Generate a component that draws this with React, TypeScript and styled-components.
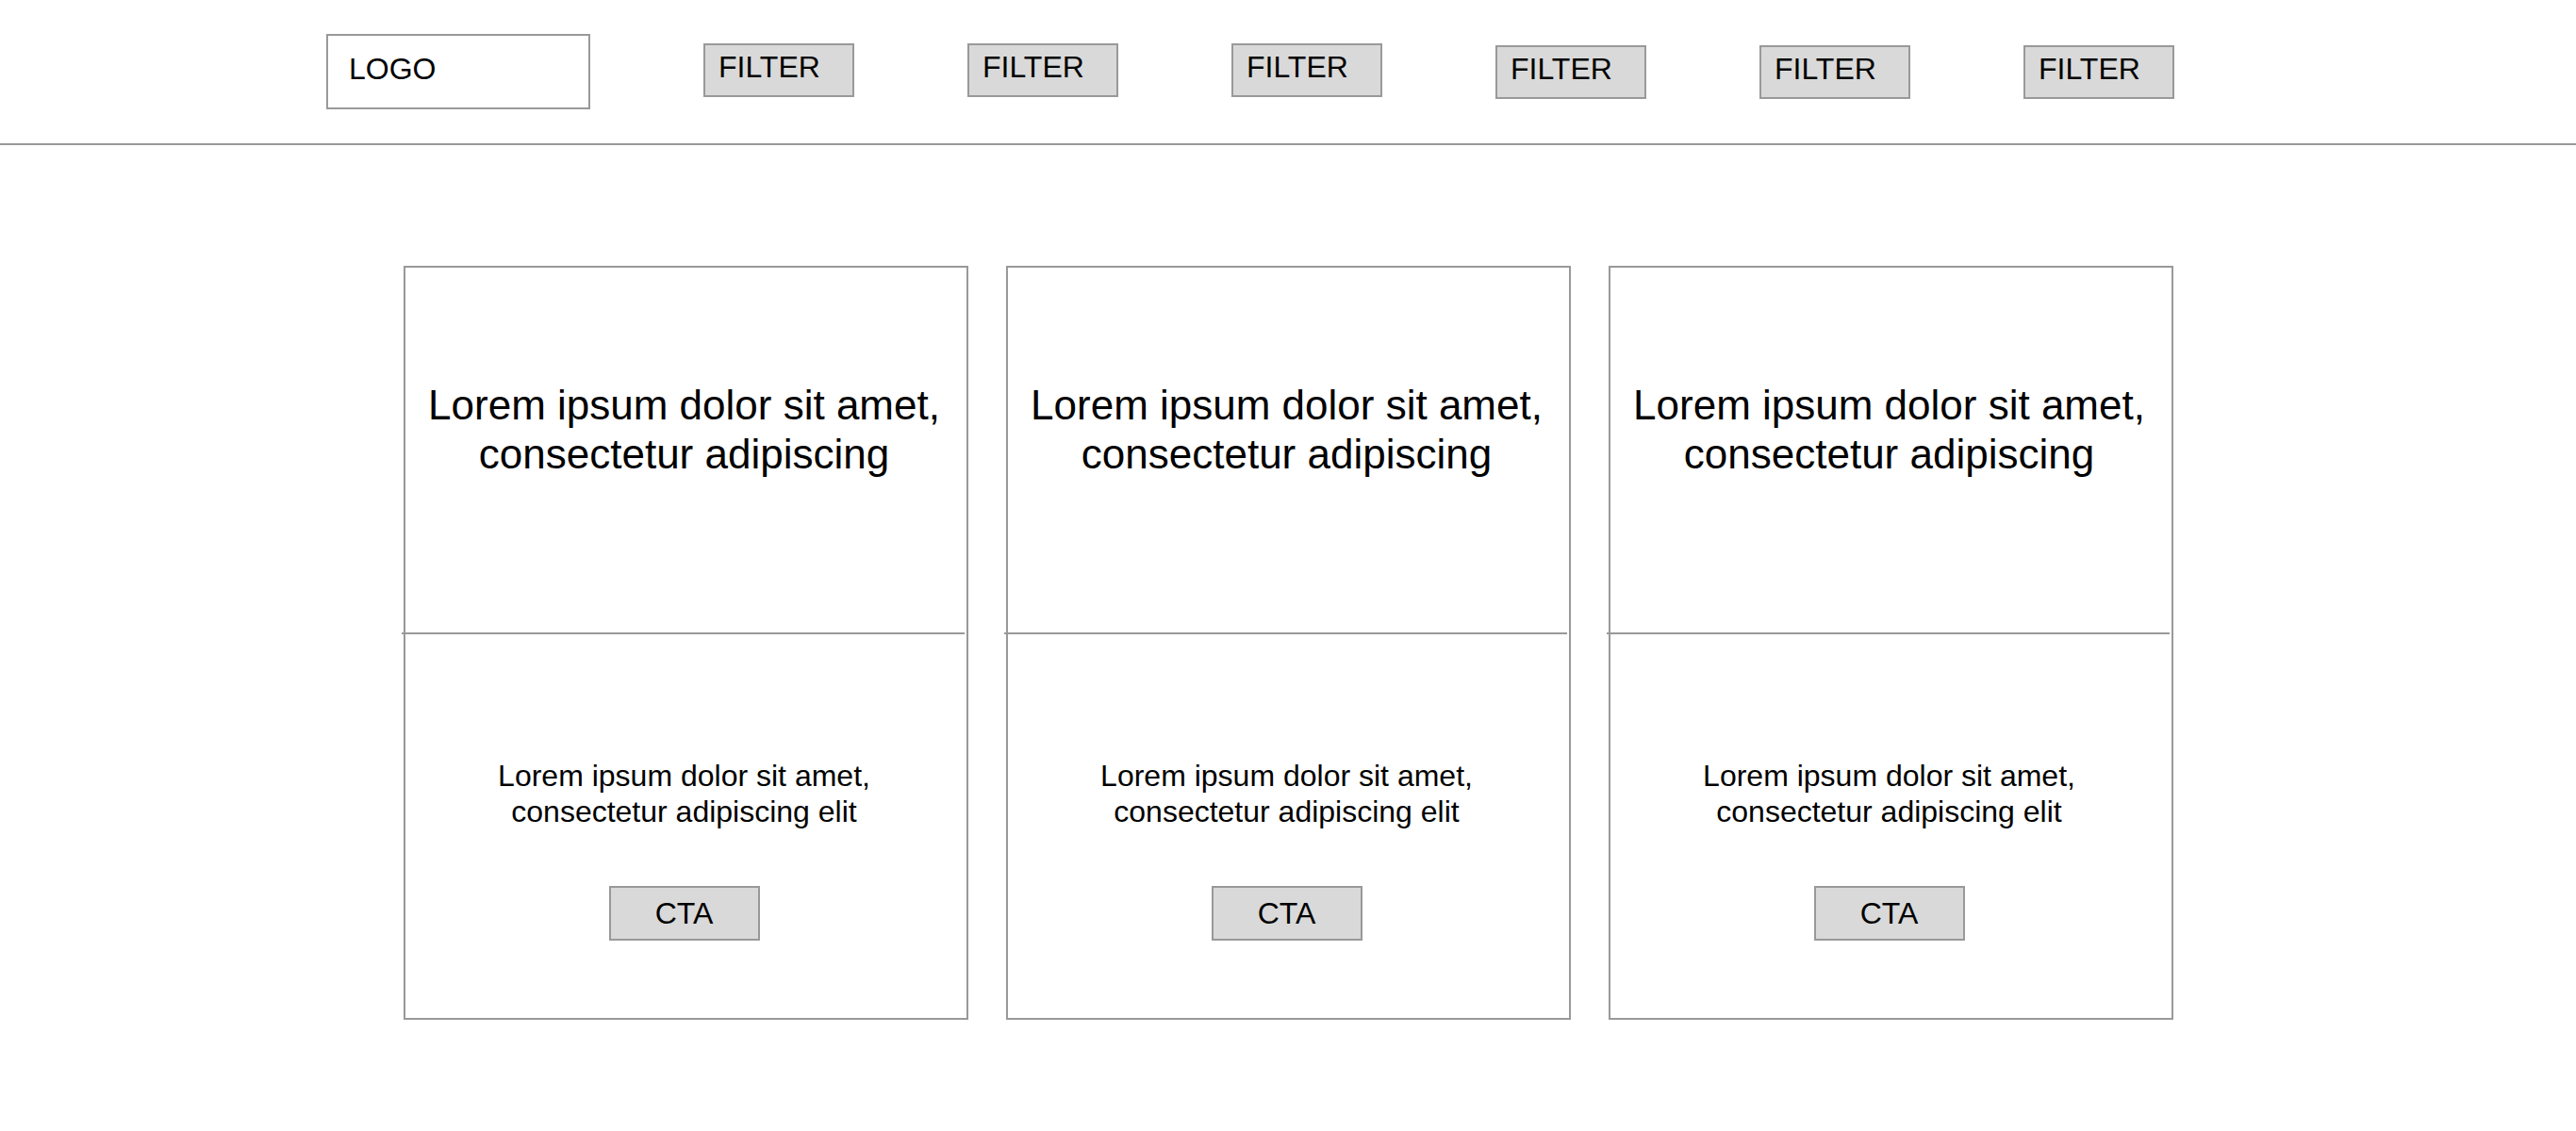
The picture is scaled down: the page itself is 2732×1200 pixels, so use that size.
import React from "react";
import styled, { createGlobalStyle } from "styled-components";

const GlobalStyle = createGlobalStyle`
  html, body {
    margin: 0;
    padding: 0;
    background: #ffffff;
  }
  body {
    font-family: "Liberation Sans", Arial, Helvetica, sans-serif;
    color: #000000;
  }
  *, *::before, *::after {
    box-sizing: border-box;
  }
`;

const Page = styled.div`
  width: 2732px;
  min-height: 1200px;
  background: #ffffff;
`;

const Header = styled.header`
  display: flex;
  align-items: flex-start;
  gap: 120px;
  padding: 36px 0 36px 346px;
  border-bottom: 2px solid #999999;
`;

const Logo = styled.div`
  width: 280px;
  height: 80px;
  border: 2px solid #999999;
  padding: 13px 0 0 22px;
  font-size: 32px;
  line-height: 44px;
`;

const Filter = styled.button<{ $low?: boolean }>`
  display: block;
  width: 160px;
  margin-top: ${(p) => (p.$low ? 12 : 10)}px;
  padding: 1px 14px 8px;
  border: 2px solid #999999;
  border-radius: 0;
  background: #d9d9d9;
  color: #000000;
  font-family: inherit;
  font-size: 32px;
  line-height: 44px;
  text-align: left;
`;

const Main = styled.main`
  display: flex;
  justify-content: flex-start;
  gap: 40px;
  padding: 128px 0 0 428px;
`;

const Card = styled.article`
  width: 599px;
  height: 800px;
  border: 2px solid #999999;
  padding-right: 4px;
  display: flex;
  flex-direction: column;
`;

const CardTop = styled.div`
  height: 387px;
  padding-top: 120px;
  text-align: center;
`;

const Heading = styled.h2`
  margin: 0;
  font-weight: 400;
  font-size: 44px;
  line-height: 52px;
`;

const Divider = styled.hr`
  display: block;
  margin: 0 0 0 -4px;
  width: calc(100% + 6px);
  height: 2px;
  border: 0;
  background: #999999;
`;

const CardBottom = styled.div`
  flex: 1;
  padding-top: 131px;
  display: flex;
  flex-direction: column;
  align-items: center;
`;

const Body = styled.p`
  margin: 0;
  font-size: 32px;
  line-height: 38px;
  text-align: center;
`;

const Cta = styled.button`
  margin-top: 60px;
  width: 160px;
  height: 58px;
  padding: 0;
  border: 2px solid #999999;
  border-radius: 0;
  background: #d9d9d9;
  color: #000000;
  font-family: inherit;
  font-size: 32px;
  line-height: 54px;
`;

const filters = [false, false, false, true, true, true];

export default function App() {
  return (
    <Page>
      <GlobalStyle />
      <Header>
        <Logo>LOGO</Logo>
        {filters.map((low, i) => (
          <Filter key={i} $low={low}>
            FILTER
          </Filter>
        ))}
      </Header>
      <Main>
        {[0, 1, 2].map((i) => (
          <Card key={i}>
            <CardTop>
              <Heading>
                Lorem ipsum dolor sit amet,
                <br />
                consectetur adipiscing
              </Heading>
            </CardTop>
            <Divider />
            <CardBottom>
              <Body>
                Lorem ipsum dolor sit amet,
                <br />
                consectetur adipiscing elit
              </Body>
              <Cta>CTA</Cta>
            </CardBottom>
          </Card>
        ))}
      </Main>
    </Page>
  );
}
